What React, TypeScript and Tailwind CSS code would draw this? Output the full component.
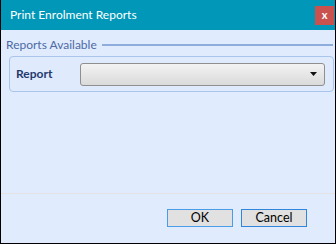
import React from "react";

export default function App() {
  const font = { fontFamily: 'Lato, "Noto Sans", sans-serif' };
  return (
    <div
      className="w-[336px] h-[244px] flex flex-col border-x border-b border-black bg-[#e0ecfe] overflow-hidden"
      style={font}
    >
      <div className="h-[30px] shrink-0 bg-[#0097b8] flex items-center justify-between pl-[9px] pr-[1px]">
        <span className="text-white text-[12px] leading-none">Print Enrolment Reports</span>
        <div className="w-[19px] h-[19px] bg-[#c9524f] flex items-center justify-center text-white text-[11px] font-bold leading-none pb-[1px]">
          x
        </div>
      </div>
      <div className="flex-1 flex flex-col">
        <div className="flex items-center pl-[5px] pr-[2px] pt-[5px] h-[24px]">
          <span className="text-[#4d6aa5] text-[12px] leading-none">Reports Available</span>
          <div className="flex-1 h-[2px] bg-[#8eaddc] ml-[5px]" />
        </div>
        <div className="ml-[8px] mr-[1px] mt-[2px] h-[36px] rounded-[4px] border border-[#a9c5ec] bg-[#dfeafd] flex items-center pl-[6px] pr-[8px]">
          <span className="w-[64px] text-[#1f3a6e] text-[12px] font-bold leading-none">Report</span>
          <div className="flex-1 h-[23px] rounded-[3px] border border-[#8f8f8f] bg-gradient-to-b from-[#f3f3f3] to-[#dadada] flex items-center justify-end pr-[7px]">
            <svg width="7" height="4" viewBox="0 0 7 4">
              <polygon points="0,0 7,0 3.5,4" fill="#111" />
            </svg>
          </div>
        </div>
        <div className="flex-1" />
        <div className="h-[1px] bg-[#e3e3e6]" />
        <div className="h-[49px] flex items-start justify-end pt-[15px] pr-[28px] gap-[8px]">
          <button className="w-[66px] h-[18px] bg-[#e1e1e1] border border-[#4a9be8] text-[12.5px] leading-none text-black">
            OK
          </button>
          <button className="w-[66px] h-[18px] bg-[#e1e1e1] border border-[#2f86dc] text-[12.5px] leading-none text-black">
            Cancel
          </button>
        </div>
      </div>
    </div>
  );
}
